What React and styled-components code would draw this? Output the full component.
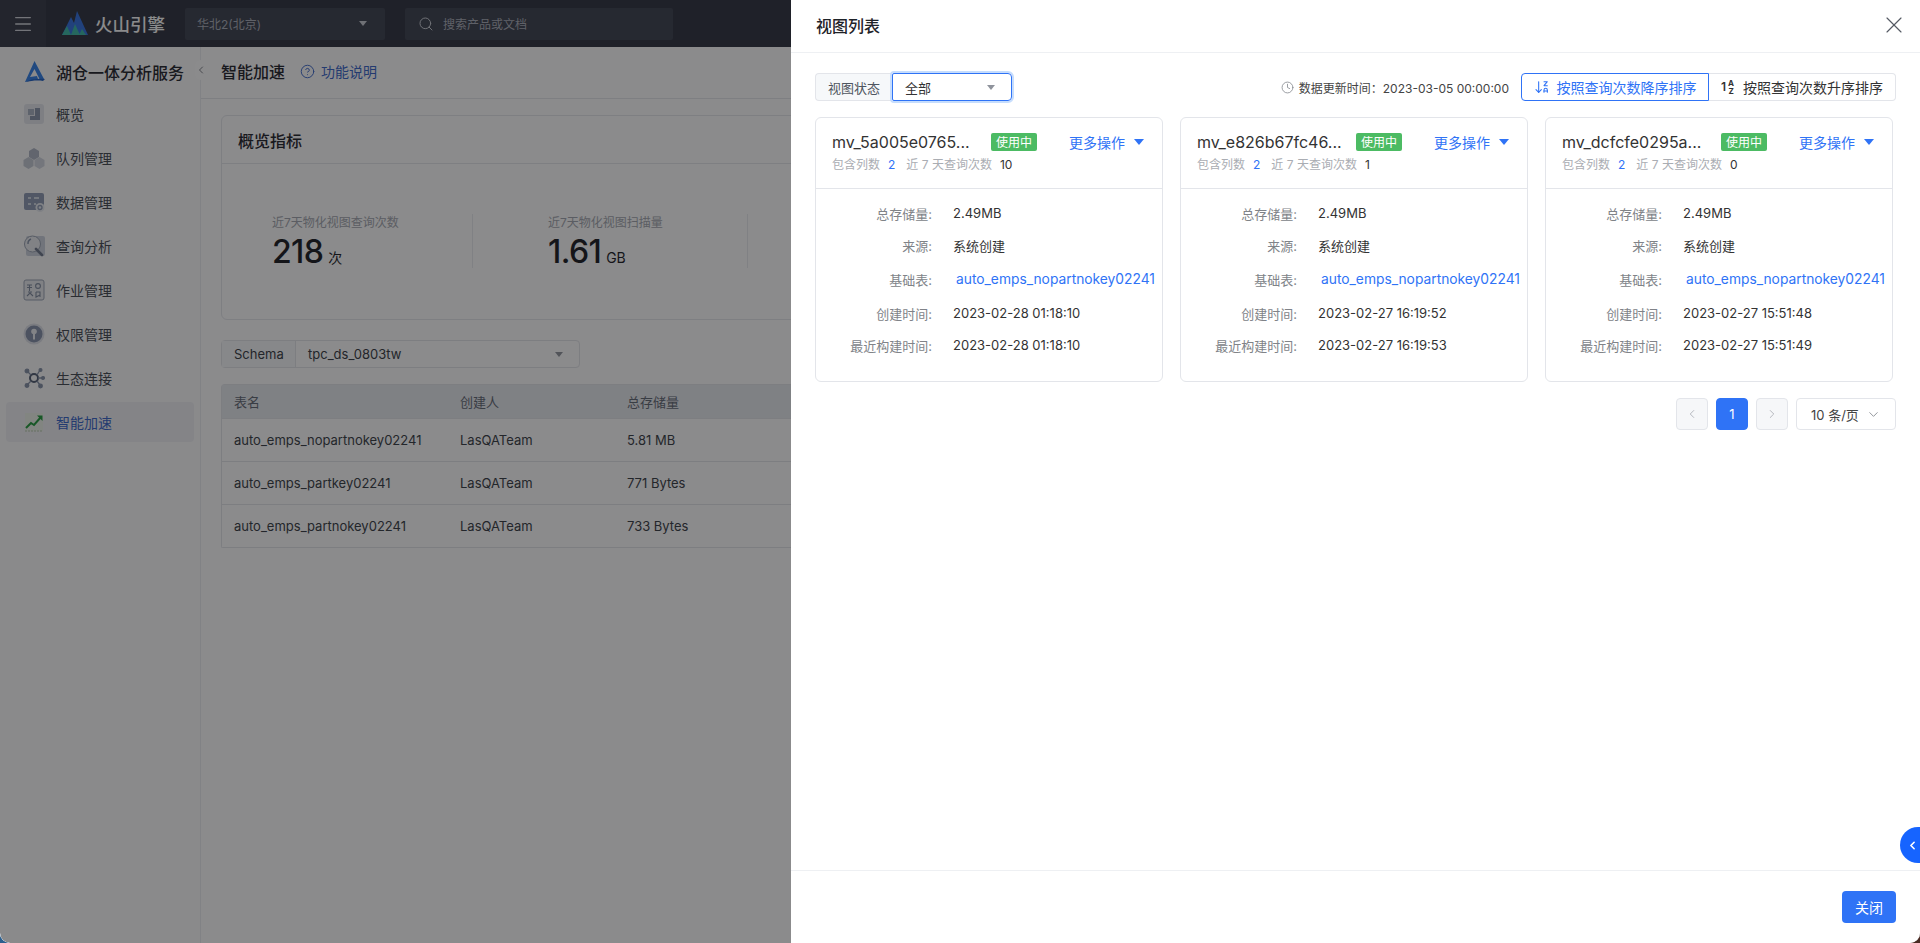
import React from 'react';
import styled, { createGlobalStyle } from 'styled-components';
import { Menu, Search, ChevronLeft, ChevronRight, ChevronDown, X, Clock, ArrowDownZA, HelpCircle } from 'lucide-react';

const GlobalStyle = createGlobalStyle`
  html, body { margin: 0; padding: 0; height: 100%; }
  body {
    font-family: Inter, "Noto Sans CJK SC", sans-serif;
    background: linear-gradient(to right, #2c5f8e 50%, #4a2a22 50%);
    overflow: hidden;
  }
  * { box-sizing: border-box; }
`;

const Page = styled.div`
  position: relative;
  width: 1920px;
  height: 943px;
  display: flex;
  flex-direction: column;
  background: #fff;
  overflow: hidden;
  border-radius: 0 0 10px 10px;
`;

/* top bar */
const TopBar = styled.header`
  flex: none;
  height: 47px;
  display: flex;
  align-items: center;
  background: #2c303d;
  color: #fff;
`;
const MenuBox = styled.div`
  width: 46px;
  height: 47px;
  display: flex;
  align-items: center;
  justify-content: center;
  background: #343846;
`;
const BrandLogo = styled.svg`
  margin-left: 16px;
  width: 26px;
  height: 26px;
`;
const BrandName = styled.span`
  margin-left: 7px;
  width: 90px;
  font-size: 17.5px;
  font-weight: 500;
  color: #fff;
`;
const DarkField = styled.div`
  height: 32px;
  width: ${p => p.$w}px;
  margin-right: 20px;
  display: flex;
  align-items: center;
  padding: 0 18px 0 ${p => p.$pl || 12}px;
  gap: 9px;
  background: #3a3f4d;
  border-radius: 2px;
  font-size: 12px;
  color: #a9adb8;
`;
const Triangle = styled.i`
  display: inline-block;
  margin-left: ${p => (p.$auto ? 'auto' : 0)};
  width: 0;
  height: 0;
  border-left: ${p => p.$s || 5}px solid transparent;
  border-right: ${p => p.$s || 5}px solid transparent;
  border-top: ${p => (p.$s || 5) + 1}px solid ${p => p.$c || '#8f939c'};
`;

/* page under the drawer */
const Body = styled.div`
  flex: 1;
  display: flex;
  min-height: 0;
`;
const Sidebar = styled.aside`
  position: relative;
  flex: none;
  width: 201px;
  padding: 0 6px;
  border-right: 1px solid #eceef2;
  background: #fdfdfe;
`;
const ServiceRow = styled.div`
  height: 47px;
  padding: 2px 0 0 17px;
  display: flex;
  align-items: center;
  gap: 10px;
  font-size: 16px;
  font-weight: 500;
  color: #1d2129;
`;
const NavItem = styled.div`
  height: 40px;
  margin-bottom: 4px;
  display: flex;
  align-items: center;
  gap: 11px;
  padding-left: 17px;
  border-radius: 4px;
  font-size: 14px;
  color: ${p => (p.$active ? '#3563c9' : '#414750')};
  background: ${p => (p.$active ? '#f1f2f5' : 'transparent')};
`;
const NavIcon = styled.svg`
  width: 22px;
  height: 22px;
  flex: none;
`;
const CollapseTab = styled.div`
  position: absolute;
  top: 13px;
  right: -7px;
  width: 12px;
  height: 20px;
  display: flex;
  align-items: center;
  justify-content: center;
  background: #fff;
  border-radius: 6px;
  color: #7c8088;
`;

const Main = styled.main`
  flex: 1;
  min-width: 0;
`;
const TitleRow = styled.div`
  height: 52px;
  display: flex;
  align-items: center;
  padding: 0 0 3px 20px;
  border-bottom: 1px solid #e6e8ec;
`;
const PageTitle = styled.h1`
  margin: 0 15px 0 0;
  font-size: 16px;
  font-weight: 500;
  color: #1d2129;
`;
const HelpLink = styled.span`
  display: flex;
  align-items: center;
  gap: 6px;
  font-size: 14px;
  color: #3563c9;
`;
const Content = styled.div`
  padding: 16px 0 0 20px;
`;
const Panel = styled.section`
  height: 205px;
  border: 1px solid #e6e8ec;
  border-radius: 6px;
`;
const PanelHead = styled.div`
  height: 48px;
  padding-left: 16px;
  display: flex;
  align-items: center;
  border-bottom: 1px solid #e6e8ec;
  font-size: 16px;
  font-weight: 500;
  color: #1d2129;
`;
const StatRow = styled.div`
  display: flex;
  padding-top: 50px;
`;
const Stat = styled.div`
  width: 275px;
  height: 54px;
  padding-left: 75px;
  border-right: 1px solid #e9ebef;
  &:first-child {
    width: 251px;
    padding-left: 50px;
  }
`;
const StatLabel = styled.div`
  font-size: 12px;
  line-height: 18px;
  color: #a2a6ae;
`;
const StatValue = styled.div`
  margin-top: 1px;
  font-size: 32px;
  font-weight: 500;
  line-height: 38px;
  letter-spacing: -0.6px;
  color: #16181e;
  span {
    margin-left: 5px;
    font-size: 14px;
    font-weight: 400;
    letter-spacing: 0;
  }
`;
const SchemaBar = styled.div`
  margin-top: 20px;
  width: 359px;
  height: 28px;
  display: flex;
  border: 1px solid #e3e5ea;
  border-radius: 4px;
  font-size: 13px;
  color: #333840;
`;
const SchemaLabel = styled.div`
  width: 74px;
  padding-left: 12px;
  display: flex;
  align-items: center;
  border-right: 1px solid #e3e5ea;
  background: #f8f9fb;
`;
const SchemaValue = styled.div`
  flex: 1;
  display: flex;
  align-items: center;
  padding: 0 16px 0 12px;
`;
const Table = styled.div`
  margin-top: 16px;
  border: 1px solid #e3e5ea;
  border-right: 0;
  border-bottom-left-radius: 2px;
  border-top-left-radius: 4px;
  font-size: 13px;
  color: #343a42;
`;
const TableRow = styled.div`
  display: grid;
  grid-template-columns: 226px 167px 1fr;
  align-items: center;
  height: ${p => (p.$head ? 33 : 43)}px;
  padding-left: 12px;
  background: ${p => (p.$head ? '#e8ebf0' : '#fff')};
  color: ${p => (p.$head ? '#5f6672' : 'inherit')};
  border-top: ${p => (p.$head ? 0 : '1px solid #e3e5ea')};
`;

/* mask + drawer */
const Mask = styled.div`
  position: absolute;
  inset: 0;
  background: rgba(18, 18, 20, 0.49);
  backdrop-filter: blur(0.6px);
`;
const Drawer = styled.aside`
  position: absolute;
  top: 0;
  right: 0;
  bottom: 0;
  width: 1129px;
  display: flex;
  flex-direction: column;
  background: #fff;
  color: #333;
`;
const DrawerHead = styled.div`
  flex: none;
  height: 53px;
  display: flex;
  align-items: center;
  justify-content: space-between;
  padding: 0 12px 2px 25px;
  border-bottom: 1px solid #eef0f3;
`;
const DrawerTitle = styled.h2`
  margin: 0;
  font-size: 16px;
  font-weight: 500;
  color: #1f2329;
`;
const DrawerBody = styled.div`
  flex: 1;
  padding: 20px 24px 0 24px;
`;
const Toolbar = styled.div`
  height: 28px;
  display: flex;
  align-items: center;
`;
const FilterLabel = styled.div`
  height: 28px;
  width: 77px;
  display: flex;
  align-items: center;
  justify-content: center;
  background: #f6f8fa;
  border: 1px solid #e3e5ea;
  border-right: 0;
  border-radius: 4px 0 0 4px;
  font-size: 13px;
  color: #4e5560;
`;
const FocusSelect = styled.div`
  height: 28px;
  width: 120px;
  display: flex;
  align-items: center;
  padding: 0 16px 0 12px;
  border: 1px solid #2f73f6;
  border-radius: 2px 4px 4px 2px;
  box-shadow: 0 0 0 2px #c6ddfd;
  font-size: 13px;
  color: #333;
`;
const UpdateInfo = styled.div`
  margin-left: auto;
  display: flex;
  align-items: center;
  gap: 5px;
  margin-right: 12px;
  font-size: 12px;
  color: #444;
`;
const SortButton = styled.div`
  height: 28px;
  width: ${p => p.$w}px;
  display: flex;
  align-items: center;
  justify-content: center;
  gap: 7px;
  font-size: 14px;
  color: ${p => (p.$on ? '#2f73f6' : '#333')};
  border: 1px solid ${p => (p.$on ? '#2f73f6' : '#e3e5ea')};
  border-left-width: ${p => (p.$on ? 1 : 0)}px;
  border-radius: ${p => (p.$on ? '4px 0 0 4px' : '0 4px 4px 0')};
`;
const SortGlyph = styled.svg`
  width: 15px;
  height: 16px;
  flex: none;
`;
const CardGrid = styled.div`
  margin-top: 16px;
  display: grid;
  grid-template-columns: repeat(3, 348px);
  gap: 17px;
`;
const Card = styled.article`
  height: 265px;
  border: 1px solid #e3e5ea;
  border-radius: 6px;
`;
const CardHead = styled.div`
  height: 71px;
  padding: 14px 16px 0 16px;
  border-bottom: 1px solid #e3e5ea;
`;
const CardTop = styled.div`
  display: flex;
  align-items: center;
  height: 19px;
`;
const CardName = styled.div`
  width: 159px;
  font-size: 16px;
  color: #333;
  white-space: nowrap;
`;
const Badge = styled.span`
  width: 46px;
  height: 18px;
  display: flex;
  align-items: center;
  justify-content: center;
  background: #4cbb63;
  border-radius: 2px;
  font-size: 12px;
  color: #fff;
`;
const MoreAction = styled.span`
  margin-left: auto;
  display: flex;
  align-items: center;
  gap: 9px;
  font-size: 14px;
  color: #2f73f6;
  padding-right: 2px;
`;
const CardSub = styled.div`
  margin-top: 5px;
  display: flex;
  align-items: center;
  font-size: 12px;
  line-height: 18px;
  color: #aaadb3;
`;
const SubNum = styled.span`
  margin: ${p => (p.$blue ? '0 11px 0 8px' : '0 0 0 8px')};
  color: ${p => (p.$blue ? '#2f73f6' : '#333')};
`;
const Details = styled.div`
  padding-top: 8px;
`;
const DetailRow = styled.div`
  display: flex;
  align-items: center;
  height: ${p => (p.$tall ? 36 : 32)}px;
  font-size: 13px;
`;
const DetailLabel = styled.span`
  width: 116px;
  flex: none;
  text-align: right;
  color: #808388;
`;
const DetailValue = styled.span`
  margin-left: 21px;
  color: #333;
  white-space: nowrap;
`;
const DetailLink = styled.span`
  margin-left: 24px;
  font-size: 13.8px;
  color: #2f73f6;
  white-space: nowrap;
`;
const Pager = styled.div`
  margin-top: 16px;
  display: flex;
  justify-content: flex-end;
  gap: 8px;
`;
const PageBtn = styled.div`
  width: 32px;
  height: 32px;
  display: flex;
  align-items: center;
  justify-content: center;
  border-radius: 4px;
  font-size: 13px;
  color: ${p => (p.$on ? '#fff' : '#a8abb2')};
  background: ${p => (p.$on ? '#2f73f6' : '#f6f7f9')};
  border: 1px solid ${p => (p.$on ? '#2f73f6' : '#e3e5ea')};
`;
const PageSize = styled.div`
  width: 100px;
  height: 32px;
  display: flex;
  align-items: center;
  justify-content: space-between;
  padding: 0 14px;
  border: 1px solid #e3e5ea;
  border-radius: 4px;
  font-size: 13px;
  color: #444;
`;
const DrawerFoot = styled.div`
  flex: none;
  height: 73px;
  display: flex;
  align-items: center;
  justify-content: flex-end;
  padding-right: 24px;
  border-top: 1px solid #eef0f3;
`;
const CloseButton = styled.div`
  width: 54px;
  height: 32px;
  display: flex;
  align-items: center;
  justify-content: center;
  background: #2f73f6;
  border-radius: 4px;
  font-size: 14px;
  color: #fff;
`;
const FloatToggle = styled.div`
  position: absolute;
  right: 0;
  top: 827px;
  width: 20px;
  height: 36px;
  display: flex;
  align-items: center;
  padding-left: 6px;
  background: #1664ff;
  border-radius: 18px 0 0 18px;
  color: #fff;
`;

const NAV_ICONS = [
  <g key="a">
    <rect x="1" y="1" width="20" height="20" rx="3" fill="#e6e8ee" />
    <rect x="5" y="6" width="6" height="6" fill="#a8b0c0" />
    <path d="M12 5h5v12H7v-4h5z" fill="#8793a9" />
  </g>,
  <g key="b">
    <path d="M11 1l5 3v6l-5 3-5-3V4z" fill="#aeb5c4" />
    <path d="M5.5 10l5 3v6l-5 3-5-3v-6z" fill="#c5cad5" />
    <path d="M16.5 10l5 3v6l-5 3-5-3v-6z" fill="#d2d6df" />
  </g>,
  <g key="c">
    <rect x="1" y="2" width="20" height="17" rx="2" fill="#8d9ab3" />
    <path d="M5 7h3M11 7h5M5 13h3M11 13h2" stroke="#e8ebf1" strokeWidth="1.6" />
    <circle cx="17" cy="16.5" r="4.5" fill="#e8ebf1" />
    <circle cx="17" cy="16.5" r="2" fill="none" stroke="#8d9ab3" strokeWidth="1.3" />
  </g>,
  <g key="d">
    <rect x="3" y="1" width="19" height="20" rx="2" fill="#cdd3de" />
    <circle cx="9.5" cy="9" r="8" fill="#eceef2" stroke="#9aa3b3" strokeWidth="1" />
    <path d="M8 4a5 5 0 0 0-3 5" stroke="#8793a9" strokeWidth="1.4" fill="none" />
    <path d="M13 14l6 6" stroke="#6d7789" strokeWidth="2.6" strokeLinecap="round" />
  </g>,
  <g key="e">
    <rect x="1" y="1" width="20" height="20" rx="2" fill="#e9ebf0" stroke="#9aa3b3" strokeWidth="1" />
    <path d="M4 6h5M4 8.5h5M6.5 6v6" stroke="#7f8a9e" strokeWidth="1.1" />
    <circle cx="15" cy="7" r="2.4" fill="none" stroke="#7f8a9e" strokeWidth="1.1" />
    <path d="M4 17l3-3 3 3M5 13h4" stroke="#7f8a9e" strokeWidth="1.1" fill="none" />
    <path d="M13 13h4v5M13 13v5l4-2" stroke="#7f8a9e" strokeWidth="1.1" fill="none" />
  </g>,
  <g key="f">
    <circle cx="11" cy="11" r="10.5" fill="#dfe2e9" />
    <circle cx="11" cy="11" r="8.5" fill="#8390aa" />
    <circle cx="11" cy="8.5" r="2.8" fill="#eef0f4" />
    <rect x="10" y="10" width="2" height="6.5" fill="#eef0f4" />
  </g>,
  <g key="g" stroke="#8390a6" strokeWidth="1.3" fill="none">
    <circle cx="11" cy="11" r="4" strokeWidth="2" stroke="#4f5b70" />
    <path d="M8 8L4 4M14 8l3-5M15 11h4M14 14l3 4M8 14l-4 4" />
    <circle cx="4" cy="4" r="1.8" fill="#8390a6" />
    <circle cx="17.5" cy="3" r="1.4" fill="#8390a6" />
    <circle cx="20" cy="11" r="1.4" fill="#8390a6" />
    <circle cx="17.5" cy="19" r="1.8" fill="#8390a6" />
    <circle cx="4" cy="18.5" r="1.8" fill="#8390a6" />
  </g>,
  <g key="h">
    <rect x="2" y="2" width="18" height="18" fill="#eef3ea" />
    <path d="M3 17l5-5 3 2 7-8" stroke="#1f9a3a" strokeWidth="2" fill="none" />
    <path d="M14 4.5l5.5 0 0 5.5z" fill="#1f9a3a" />
    <path d="M2 20h18" stroke="#b9c9ae" strokeWidth="1" strokeDasharray="2 1" />
  </g>,
];
const NAV = ['概览', '队列管理', '数据管理', '查询分析', '作业管理', '权限管理', '生态连接', '智能加速'];

const ROWS = [
  ['auto_emps_nopartnokey02241', 'LasQATeam', '5.81 MB'],
  ['auto_emps_partkey02241', 'LasQATeam', '771 Bytes'],
  ['auto_emps_partnokey02241', 'LasQATeam', '733 Bytes'],
];

const CARDS = [
  { name: 'mv_5a005e0765...', count: 10, created: '2023-02-28 01:18:10', built: '2023-02-28 01:18:10' },
  { name: 'mv_e826b67fc46...', count: 1, created: '2023-02-27 16:19:52', built: '2023-02-27 16:19:53' },
  { name: 'mv_dcfcfe0295a...', count: 0, created: '2023-02-27 15:51:48', built: '2023-02-27 15:51:49' },
];

const ViewCard = ({ card }) => (
  <Card>
    <CardHead>
      <CardTop>
        <CardName>{card.name}</CardName>
        <Badge>使用中</Badge>
        <MoreAction>更多操作<Triangle $s={5.5} $c="#2f73f6" /></MoreAction>
      </CardTop>
      <CardSub>
        包含列数<SubNum $blue>2</SubNum>近 7 天查询次数<SubNum>{card.count}</SubNum>
      </CardSub>
    </CardHead>
    <Details>
      <DetailRow><DetailLabel>总存储量:</DetailLabel><DetailValue>2.49MB</DetailValue></DetailRow>
      <DetailRow><DetailLabel>来源:</DetailLabel><DetailValue>系统创建</DetailValue></DetailRow>
      <DetailRow $tall><DetailLabel>基础表:</DetailLabel><DetailLink>auto_emps_nopartnokey02241</DetailLink></DetailRow>
      <DetailRow><DetailLabel>创建时间:</DetailLabel><DetailValue>{card.created}</DetailValue></DetailRow>
      <DetailRow><DetailLabel>最近构建时间:</DetailLabel><DetailValue>{card.built}</DetailValue></DetailRow>
    </Details>
  </Card>
);

export default function App() {
  return (
    <>
      <GlobalStyle />
      <Page>
        <TopBar>
          <MenuBox><Menu size={22} color="#d0d3da" strokeWidth={1.4} /></MenuBox>
          <BrandLogo viewBox="0 0 26 26">
            <path d="M0 24L9 6l3 6 3-12 11 24z" fill="#2f6fe0" />
            <path d="M0 24l5-9 4 9zM9 24l4-11 5 11zM17 24l3-6 4 6z" fill="#37b8a6" />
          </BrandLogo>
          <BrandName>火山引擎</BrandName>
          <DarkField $w={200}>华北2(北京)<Triangle $auto $s={4} $c="#c8ccd4" /></DarkField>
          <DarkField $w={268} $pl={13}><Search size={16} color="#c8ccd4" strokeWidth={1.5} />搜索产品或文档</DarkField>
        </TopBar>
        <Body>
          <Sidebar>
            <ServiceRow>
              <svg width="23" height="24" viewBox="0 0 23 24">
                <path d="M11.5 1L21 19l-4 1-5.5-11L7 17l7-1 1 3-13 3z" fill="#2f7fe8" />
                <path d="M2 22c5-3 14-4 20-3l-2 2c-6-1-12 0-18 1z" fill="#1d5fc4" />
              </svg>
              湖仓一体分析服务
            </ServiceRow>
            {NAV.map((label, i) => (
              <NavItem key={label} $active={i === 7}>
                <NavIcon viewBox="0 0 22 22">{NAV_ICONS[i]}</NavIcon>
                {label}
              </NavItem>
            ))}
            <CollapseTab><ChevronLeft size={12} /></CollapseTab>
          </Sidebar>
          <Main>
            <TitleRow>
              <PageTitle>智能加速</PageTitle>
              <HelpLink><HelpCircle size={15} strokeWidth={1.5} />功能说明</HelpLink>
            </TitleRow>
            <Content>
              <Panel>
                <PanelHead>概览指标</PanelHead>
                <StatRow>
                  <Stat>
                    <StatLabel>近7天物化视图查询次数</StatLabel>
                    <StatValue>218<span>次</span></StatValue>
                  </Stat>
                  <Stat>
                    <StatLabel>近7天物化视图扫描量</StatLabel>
                    <StatValue>1.61<span>GB</span></StatValue>
                  </Stat>
                </StatRow>
              </Panel>
              <SchemaBar>
                <SchemaLabel>Schema</SchemaLabel>
                <SchemaValue>tpc_ds_0803tw<Triangle $auto $s={4} /></SchemaValue>
              </SchemaBar>
              <Table>
                <TableRow $head><span>表名</span><span>创建人</span><span>总存储量</span></TableRow>
                {ROWS.map(r => (
                  <TableRow key={r[0]}><span>{r[0]}</span><span>{r[1]}</span><span>{r[2]}</span></TableRow>
                ))}
              </Table>
            </Content>
          </Main>
        </Body>
        <Mask />
        <Drawer>
          <DrawerHead>
            <DrawerTitle>视图列表</DrawerTitle>
            <X size={28} color="#555a63" strokeWidth={1} />
          </DrawerHead>
          <DrawerBody>
            <Toolbar>
              <FilterLabel>视图状态</FilterLabel>
              <FocusSelect>全部<Triangle $auto $s={4} /></FocusSelect>
              <UpdateInfo>
                <Clock size={13} color="#85898f" strokeWidth={1.5} />
                数据更新时间：2023-03-05 00:00:00
              </UpdateInfo>
              <SortButton $on $w={188}>
                <ArrowDownZA size={16} strokeWidth={1.6} />
                按照查询次数降序排序
              </SortButton>
              <SortButton $w={187}>
                <SortGlyph viewBox="0 0 15 16">
                  <text x="0" y="12" fontSize="12" fontWeight="600" fontFamily="Inter" fill="#333">1</text>
                  <text x="7" y="7" fontSize="8" fontWeight="700" fontFamily="Inter" fill="#333">A</text>
                  <text x="7.5" y="15" fontSize="8" fontWeight="700" fontFamily="Inter" fill="#333">Z</text>
                </SortGlyph>
                按照查询次数升序排序
              </SortButton>
            </Toolbar>
            <CardGrid>
              {CARDS.map(c => <ViewCard key={c.name} card={c} />)}
            </CardGrid>
            <Pager>
              <PageBtn><ChevronLeft size={14} strokeWidth={1.4} /></PageBtn>
              <PageBtn $on>1</PageBtn>
              <PageBtn><ChevronRight size={14} strokeWidth={1.4} /></PageBtn>
              <PageSize>10 条/页<ChevronDown size={15} color="#85898f" strokeWidth={1.4} /></PageSize>
            </Pager>
          </DrawerBody>
          <DrawerFoot>
            <CloseButton>关闭</CloseButton>
          </DrawerFoot>
        </Drawer>
        <FloatToggle><ChevronLeft size={13} strokeWidth={3} /></FloatToggle>
      </Page>
    </>
  );
}
